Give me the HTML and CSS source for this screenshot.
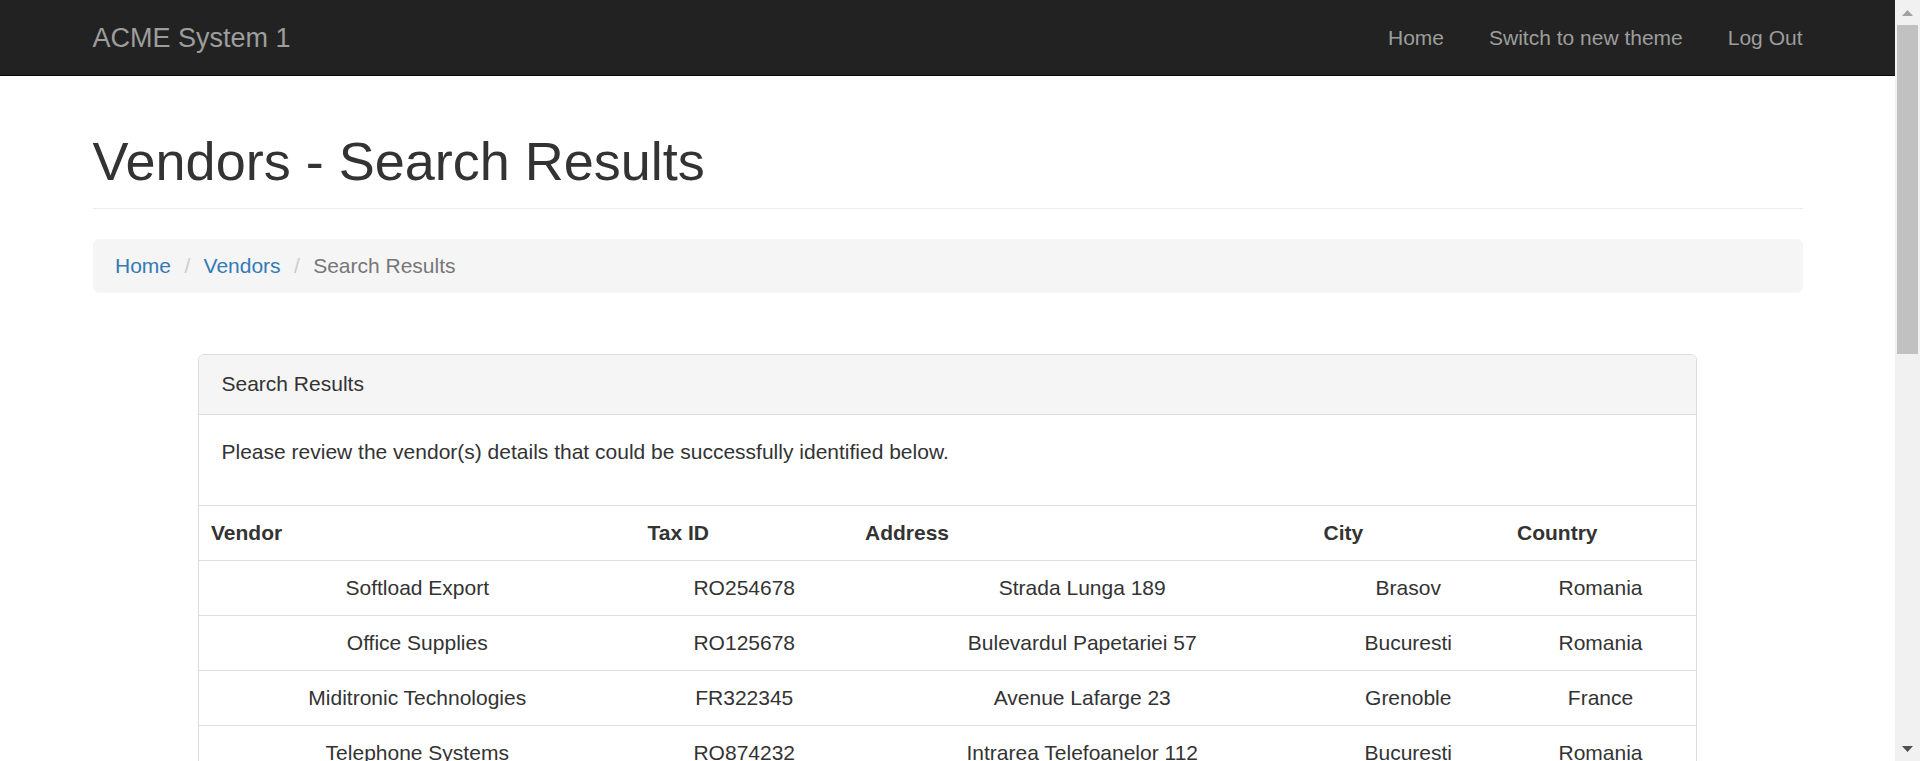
FILE: index.html
```html
<!DOCTYPE html>
<html lang="en">
<head>
<meta charset="utf-8">
<title>Vendors - Search Results</title>
<link rel="stylesheet" href="styles.css">
</head>
<body>
<div class="page">
  <nav class="navbar">
    <div class="container navbar-inner">
      <a class="brand" href="#">ACME System 1</a>
      <ul class="nav">
        <li><a href="#">Home</a></li>
        <li><a href="#">Switch to new theme</a></li>
        <li><a href="#">Log Out</a></li>
      </ul>
    </div>
  </nav>
  <main class="container">
    <h1 class="page-header">Vendors - Search Results</h1>
    <ol class="breadcrumb">
      <li><a href="#">Home</a></li>
      <li><a href="#">Vendors</a></li>
      <li class="active">Search Results</li>
    </ol>
    <section class="panel">
      <div class="panel-heading">Search Results</div>
      <div class="panel-body">
        <p>Please review the vendor(s) details that could be successfully identified below.</p>
      </div>
      <table class="table">
        <colgroup>
          <col class="c-vendor"><col class="c-tax"><col class="c-addr"><col class="c-city"><col class="c-country">
        </colgroup>
        <thead>
          <tr><th>Vendor</th><th>Tax ID</th><th>Address</th><th>City</th><th>Country</th></tr>
        </thead>
        <tbody>
          <tr><td>Softload Export</td><td>RO254678</td><td>Strada Lunga 189</td><td>Brasov</td><td>Romania</td></tr>
          <tr><td>Office Supplies</td><td>RO125678</td><td>Bulevardul Papetariei 57</td><td>Bucuresti</td><td>Romania</td></tr>
          <tr><td>Miditronic Technologies</td><td>FR322345</td><td>Avenue Lafarge 23</td><td>Grenoble</td><td>France</td></tr>
          <tr><td>Telephone Systems</td><td>RO874232</td><td>Intrarea Telefoanelor 112</td><td>Bucuresti</td><td>Romania</td></tr>
        </tbody>
      </table>
    </section>
  </main>
</div>
<div class="scrollbar" aria-hidden="true">
  <div class="sb-btn"><svg width="11" height="6" viewBox="0 0 11 6"><path d="M0 6 L5.5 0 L11 6 Z" fill="#a3a3a3"/></svg></div>
  <div class="sb-thumb"></div>
  <div class="sb-track"></div>
  <div class="sb-btn"><svg width="11" height="6" viewBox="0 0 11 6"><path d="M0 0 L11 0 L5.5 6 Z" fill="#505050"/></svg></div>
</div>
</body>
</html>
```
FILE: styles.css
```css
* { box-sizing: border-box; }

html, body {
  margin: 0;
  height: 761px;
  overflow: hidden;
}

body {
  display: flex;
  font-family: "Liberation Sans", Arial, Helvetica, sans-serif;
  font-size: 21px;
  line-height: 30px;
  color: #333;
  background: #fff;
}

.page {
  flex: 1;
  min-width: 0;
  overflow: hidden;
}

.container {
  width: 1755px;
  margin: 0 auto;
  padding: 0 22.5px;
}

/* navbar */
.navbar {
  background: #222;
  border-bottom: 1px solid #080808;
  height: 76px;
}

.navbar-inner {
  display: flex;
  justify-content: space-between;
  height: 75px;
}

.brand {
  display: block;
  margin-left: -22.5px;
  padding: 22.5px;
  font-size: 27px;
  line-height: 30px;
  color: #9d9d9d;
  text-decoration: none;
}

.nav {
  display: flex;
  list-style: none;
  margin: 0 -22.5px 0 0;
  padding: 0;
}

.nav a {
  display: block;
  padding: 22.5px;
  line-height: 30px;
  color: #9d9d9d;
  text-decoration: none;
}

/* header */
.page-header {
  margin: 56px 0 30px;
  padding-bottom: 16.5px;
  border-bottom: 1px solid #eee;
  font-size: 54px;
  line-height: 1.1;
  font-weight: 500;
  color: #333;
}

/* breadcrumb */
.breadcrumb {
  list-style: none;
  margin: 0;
  padding: 12px 22.5px;
  background: #f5f5f5;
  border-radius: 6px;
}

.breadcrumb li {
  display: inline-block;
}

.breadcrumb li + li::before {
  content: "/\00a0";
  padding: 0 7.5px;
  color: #ccc;
}

.breadcrumb a {
  color: #337ab7;
  text-decoration: none;
}

.breadcrumb .active {
  color: #777;
}

/* panel */
.panel {
  width: 1499px;
  margin: 61px auto 0;
  border: 1px solid #ddd;
  border-radius: 6px;
  box-shadow: 0 1px 1.5px rgba(0, 0, 0, 0.05);
  background: #fff;
}

.panel-heading {
  padding: 14.5px 22.5px;
  background: #f5f5f5;
  border-bottom: 1px solid #ddd;
  border-radius: 5px 5px 0 0;
}

.panel-body {
  padding: 22.5px;
}

.panel-body p {
  margin: 0 0 15px;
}

.table {
  width: 100%;
  border-collapse: collapse;
  table-layout: fixed;
}

.c-vendor { width: 436.5px; }
.c-tax { width: 217.5px; }
.c-addr { width: 458.5px; }
.c-city { width: 193.5px; }

.table th,
.table td {
  padding: 12px;
  border-top: 1px solid #ddd;
  line-height: 30px;
  vertical-align: top;
}

.table th {
  text-align: left;
  font-weight: bold;
}

.table td {
  text-align: center;
}

/* scrollbar column */
.scrollbar {
  width: 25px;
  flex: none;
  display: flex;
  flex-direction: column;
  background: #f1f1f1;
}

.sb-btn {
  height: 25px;
  flex: none;
  display: flex;
  align-items: center;
  justify-content: center;
}

.sb-thumb {
  height: 329px;
  margin: 0 2px;
  background: #c1c1c1;
  flex: none;
}

.sb-track {
  flex: 1;
}
```
